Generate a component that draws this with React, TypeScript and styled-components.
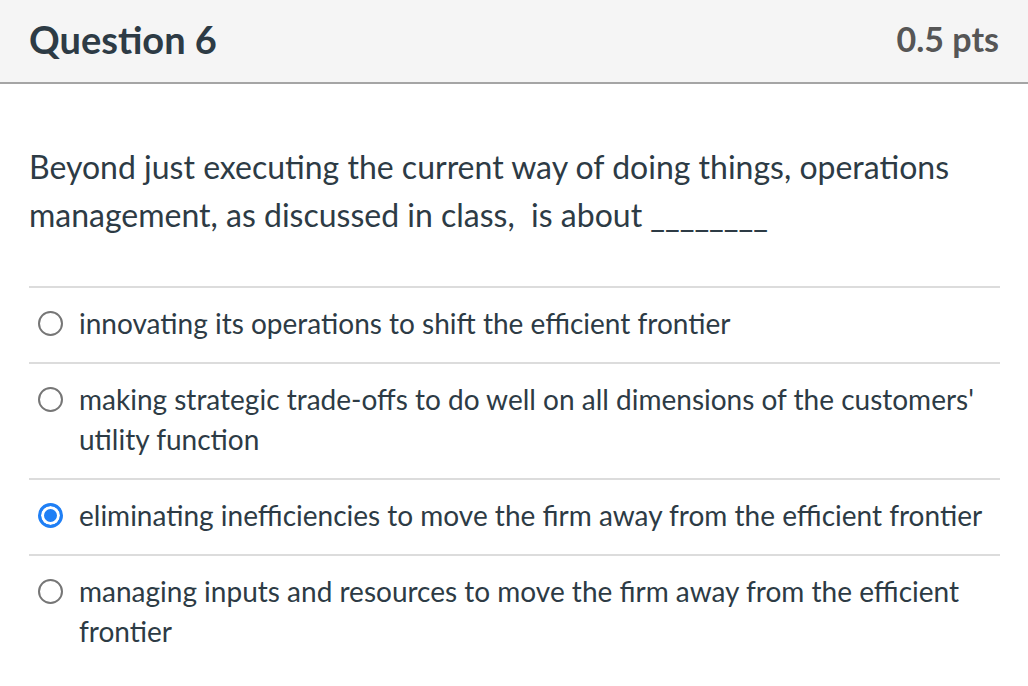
import React, { useState } from 'react';
import styled, { createGlobalStyle } from 'styled-components';

const GlobalStyle = createGlobalStyle`
  html, body {
    margin: 0;
    padding: 0;
    background: #ffffff;
  }
  body {
    font-family: Lato, "Open Sans", sans-serif;
    color: #2d3b45;
  }
`;

const QuestionCard = styled.div`
  width: 1028px;
`;

const Header = styled.div`
  box-sizing: border-box;
  display: flex;
  align-items: center;
  justify-content: space-between;
  height: 84px;
  padding: 0 29px 5px;
  background-color: #f5f5f5;
  border-bottom: 2px solid #a5a5a5;
`;

const Title = styled.h2`
  margin: 0;
  font-size: 38px;
  font-weight: 700;
  color: #2d3b45;
`;

const Points = styled.span`
  font-size: 34px;
  font-weight: 700;
  color: #565656;
`;

const Body = styled.div`
  padding: 59px 28px 0 29px;
`;

const QuestionText = styled.p`
  margin: 0 0 47px;
  font-size: 32px;
  line-height: 48px;
  color: #2d3b45;
`;

const OptionsList = styled.div`
  display: flex;
  flex-direction: column;
`;

const OptionRow = styled.label`
  display: flex;
  align-items: flex-start;
  padding: 15px 0 19px;
  border-top: 2px solid #dcdcdc;
  cursor: pointer;
`;

const RadioWrap = styled.span`
  flex-shrink: 0;
  display: flex;
  align-items: center;
  width: 50px;
  height: 40px;
  padding-left: 9px;
  box-sizing: border-box;
`;

const Radio = styled.span<{ $checked: boolean }>`
  box-sizing: border-box;
  width: 25px;
  height: 25px;
  border-radius: 50%;
  border: ${({ $checked }) => ($checked ? '3px solid #1f7ff5' : '2px solid #767676')};
  background: ${({ $checked }) => ($checked ? '#1f7ff5' : '#fff')};
  box-shadow: ${({ $checked }) => ($checked ? 'inset 0 0 0 3px #fff' : 'none')};
`;

const OptionText = styled.span`
  font-size: 28px;
  line-height: 40px;
  color: #2d3b45;
`;

const options = [
  'innovating its operations to shift the efficient frontier',
  "making strategic trade-offs to do well on all dimensions of the customers' utility function",
  'eliminating inefficiencies to move the firm away from the efficient frontier',
  'managing inputs and resources to move the firm away from the efficient frontier',
];

export default function App() {
  const [selected, setSelected] = useState(2);

  return (
    <>
      <GlobalStyle />
      <QuestionCard>
        <Header>
          <Title>Question 6</Title>
          <Points>0.5 pts</Points>
        </Header>
        <Body>
          <QuestionText>
            Beyond just executing the current way of doing things, operations management, as
            discussed in class,&nbsp; is about ________
          </QuestionText>
          <OptionsList>
            {options.map((text, i) => (
              <OptionRow key={i} onClick={() => setSelected(i)}>
                <RadioWrap>
                  <Radio $checked={selected === i} />
                </RadioWrap>
                <OptionText>{text}</OptionText>
              </OptionRow>
            ))}
          </OptionsList>
        </Body>
      </QuestionCard>
    </>
  );
}
